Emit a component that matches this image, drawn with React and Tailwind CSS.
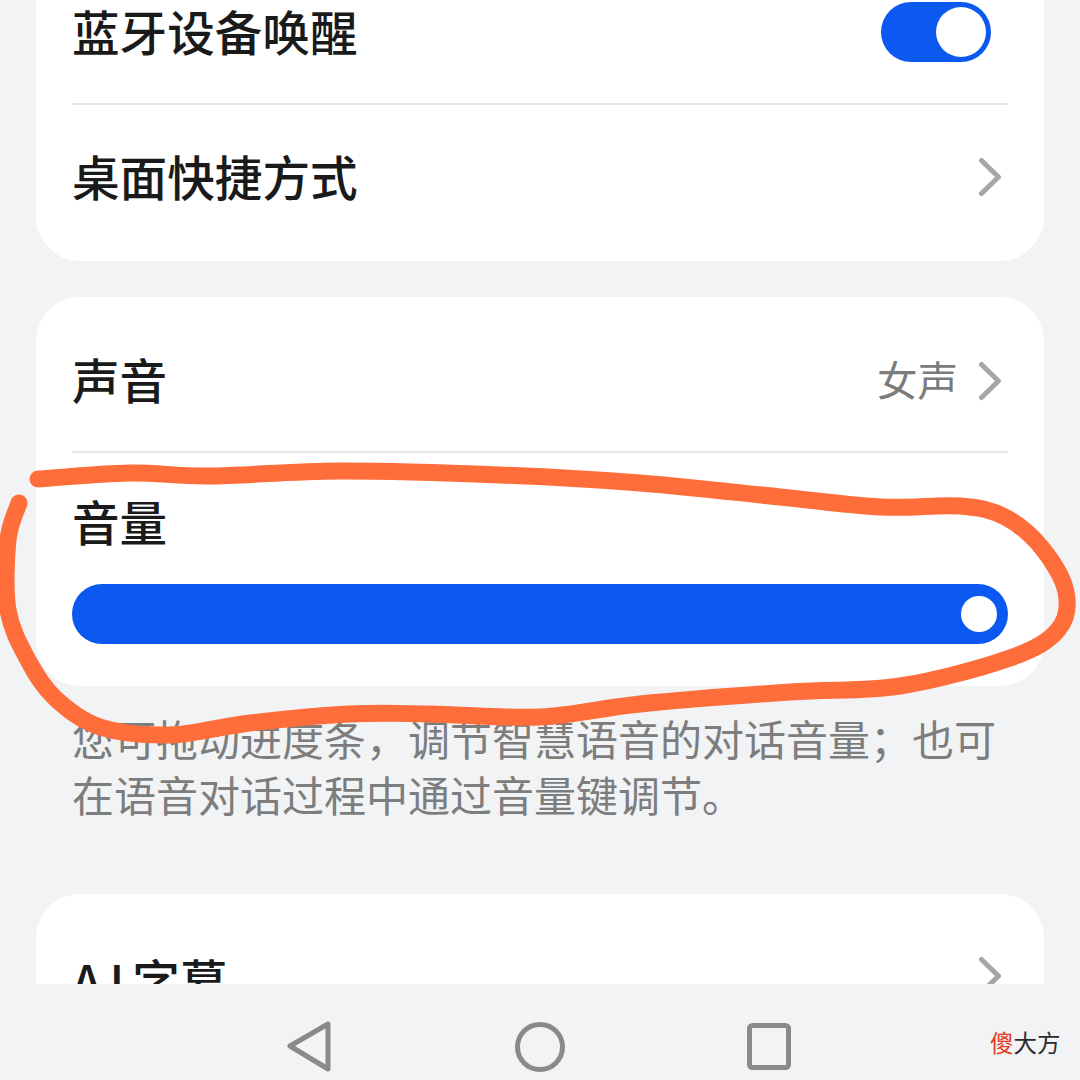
import React from "react";

const fontStack = { fontFamily: '"Noto Sans CJK SC", "Noto Sans", sans-serif' };

// 手绘圈注的路径点
const scribblePoints = [
  [38, 479], [130, 473], [210, 476], [340, 471], [500, 475], [640, 483], [780, 497], [880, 507], [960, 506],
  [1005, 517], [1042, 548], [1066, 592], [1058, 630], [1010, 658], [900, 686], [790, 692], [640, 704],
  [540, 717], [430, 714], [350, 714], [250, 723], [170, 735], [100, 727], [55, 698], [28, 660], [8, 610],
  [8, 540], [19, 503],
];

function smoothPath(points) {
  let d = `M${points[0][0]} ${points[0][1]}`;
  for (let i = 0; i < points.length - 1; i++) {
    const p0 = points[i - 1] || points[i];
    const p1 = points[i];
    const p2 = points[i + 1];
    const p3 = points[i + 2] || p2;
    const c1x = p1[0] + (p2[0] - p0[0]) / 6;
    const c1y = p1[1] + (p2[1] - p0[1]) / 6;
    const c2x = p2[0] - (p3[0] - p1[0]) / 6;
    const c2y = p2[1] - (p3[1] - p1[1]) / 6;
    d += `C${c1x} ${c1y} ${c2x} ${c2y} ${p2[0]} ${p2[1]}`;
  }
  return d;
}

function Chevron({ className }) {
  return (
    <svg className={className} width="24" height="40" viewBox="0 0 24 40" fill="none">
      <path d="M3.5 3.5L20.5 20L3.5 36.5" stroke="#a6a6a6" strokeWidth="5" strokeLinecap="round" strokeLinejoin="round" />
    </svg>
  );
}

function Divider() {
  return <div className="h-[2px] bg-[#e4e5e7]" />;
}

function NavBar() {
  return (
    <div className="relative flex h-[96px] shrink-0 items-center bg-[#f1f3f5] pb-[4px]">
      <svg className="absolute left-[285px] top-[36px]" width="48" height="54" viewBox="0 0 48 54" fill="none">
        <path d="M43 4L43 49L5 26Z" stroke="#8a8a8a" strokeWidth="5" strokeLinejoin="round" />
      </svg>
      <svg className="absolute left-[514px] top-[36px]" width="52" height="54" viewBox="0 0 52 54" fill="none">
        <circle cx="26" cy="27" r="22.5" stroke="#8a8a8a" strokeWidth="5" />
      </svg>
      <svg className="absolute left-[746px] top-[38px]" width="46" height="50" viewBox="0 0 46 50" fill="none">
        <rect x="3.5" y="3.5" width="39" height="42" rx="3" stroke="#8a8a8a" strokeWidth="5" />
      </svg>
      <div className="absolute left-[990px] top-[42px] whitespace-nowrap text-[23.5px] leading-[32px]">
        <span className="text-[#e23b22]">傻</span>
        <span className="text-[#2b2b2b]">大方</span>
      </div>
    </div>
  );
}

export default function App() {
  return (
    <div className="relative flex h-[1080px] w-[1080px] flex-col overflow-hidden bg-[#f1f3f5]" style={fontStack}>
      <div className="flex h-[984px] flex-col overflow-hidden px-[36px]">
        {/* 第一张卡片 */}
        <div className="rounded-b-[44px] bg-white px-[36px]">
          <div className="flex h-[103px] items-center justify-between pb-[37px] pr-[17px]">
            <span className="mb-[4px] text-[47.6px] font-medium leading-[60px] text-[#1a1a1a]">蓝牙设备唤醒</span>
            <div className="mb-[2px] flex h-[60px] w-[110px] items-center justify-end rounded-full bg-[#0b59f0] pr-[5px]">
              <div className="h-[50px] w-[50px] rounded-full bg-white" />
            </div>
          </div>
          <Divider />
          <div className="flex h-[156px] items-center justify-between pb-[14px] pr-[6px]">
            <span className="text-[47.6px] font-medium leading-[60px] text-[#1a1a1a]">桌面快捷方式</span>
            <Chevron className="mt-[2px]" />
          </div>
        </div>

        {/* 第二张卡片 */}
        <div className="mt-[36px] rounded-[44px] bg-white px-[36px]">
          <div className="flex h-[154px] items-center justify-between pr-[6px] pt-[14px]">
            <span className="mb-[4px] text-[47.6px] font-medium leading-[60px] text-[#1a1a1a]">声音</span>
            <div className="flex items-center gap-[20px]">
              <span className="mb-[4px] text-[40.5px] leading-[56px] text-[#7b7b7b]">女声</span>
              <Chevron />
            </div>
          </div>
          <Divider />
          <div className="pb-[42px] pt-[38px]">
            <div className="text-[47.6px] font-medium leading-[60px] text-[#1a1a1a]">音量</div>
            <div className="mt-[33px] flex h-[60px] items-center justify-end rounded-full bg-[#0b59f0] pr-[11px]">
              <div className="h-[36px] w-[36px] rounded-full bg-white" />
            </div>
          </div>
        </div>

        {/* 说明文字 */}
        <p className="mt-[24px] px-[36px] text-[42px] leading-[56px] text-[#7d7d7d]">
          您可拖动进度条，调节智慧语音的对话音量；也可在语音对话过程中通过音量键调节。
        </p>

        {/* 第三张卡片 */}
        <div className="mt-[72px] flex h-[180px] shrink-0 justify-between rounded-[44px] bg-white pl-[36px] pr-[42px] pt-[56px]">
          <span className="text-[47.6px] font-medium leading-[60px] text-[#1a1a1a]">
            <span className="tracking-[8px]">AI</span>字幕
          </span>
          <Chevron className="mt-[6px]" />
        </div>
      </div>

      <NavBar />

      {/* 手绘圈注 */}
      <svg className="pointer-events-none absolute left-0 top-0" width="1080" height="1080" viewBox="0 0 1080 1080" fill="none">
        <path d={smoothPath(scribblePoints)} stroke="#ff6d3b" strokeWidth="17" strokeLinecap="round" strokeLinejoin="round" />
      </svg>
    </div>
  );
}
